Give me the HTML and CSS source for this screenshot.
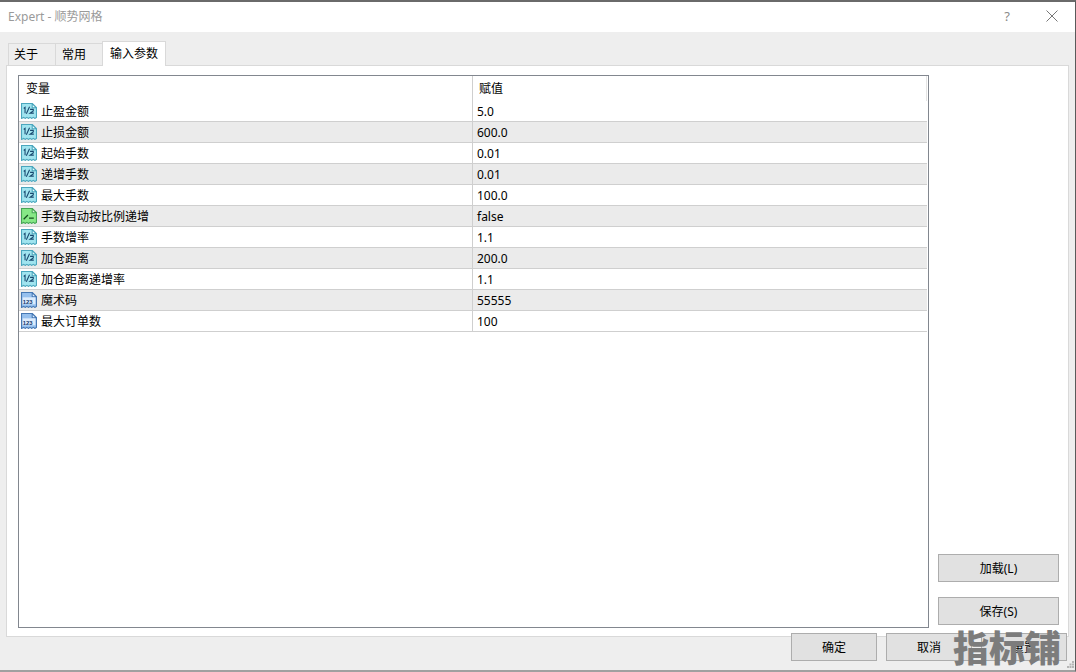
FILE: index.html
```html
<!DOCTYPE html>
<html lang="zh">
<head>
<meta charset="utf-8">
<title>Expert - 顺势网格</title>
<link rel="stylesheet" href="styles.css">
</head>
<body>
<svg class="defs" width="0" height="0" aria-hidden="true">
  <defs>
    <symbol id="i-real" viewBox="1 1 15 15">
      <path fill="#a0e4ef" stroke="#4aa6bd" d="M1.500 1.500H11.500L15.500 5.500V14.500L14 15.500L12.500 14.500L11 15.500L9.500 14.500L8 15.500L6.500 14.500L5 15.500L3.500 14.500L1.500 15.500Z"/>
      <path fill="#ecfcfe" stroke="#4aa6bd" d="M11.500 1.500V5.500H15.500Z"/>
      <path fill="none" stroke="#17476e" stroke-width="1" d="M3.500 6L4.800 5V10.500M9 4.500L6 11M9.500 7H12.500V8.500L9.500 10.500H13"/>
    </symbol>
    <symbol id="i-int" viewBox="1 1 15 15">
      <path fill="#96c0ee" stroke="#4678b4" d="M1.500 1.500H11.500L15.500 5.500V14.500L14 15.500L12.500 14.500L11 15.500L9.500 14.500L8 15.500L6.500 14.500L5 15.500L3.500 14.500L1.500 15.500Z"/>
      <path fill="#e4f0ff" stroke="#4678b4" d="M11.500 1.500V5.500H15.500Z"/>
      <rect x="2.500" y="6" width="12" height="6.500" fill="#dcebfc"/>
      <text x="2.700" y="11.800" class="icon-text">123</text>
    </symbol>
    <symbol id="i-bool" viewBox="1 1 15 15">
      <path fill="#86e886" stroke="#45a555" d="M1.500 1.500H11.500L15.500 5.500V14.500L14 15.500L12.500 14.500L11 15.500L9.500 14.500L8 15.500L6.500 14.500L5 15.500L3.500 14.500L1.500 15.500Z"/>
      <path fill="#dcfadc" stroke="#45a555" d="M11.500 1.500V5.500H15.500Z"/>
      <path fill="none" stroke="#14501f" stroke-width="1.200" d="M3.500 11.500L7.500 7.500M8.500 10.500H13"/>
    </symbol>
  </defs>
</svg>

<div class="window">
  <header class="titlebar">
    <span class="title">Expert - 顺势网格</span>
    <span class="help">?</span>
    <svg class="close" width="12" height="12" viewBox="0 0 12 12"><path d="M0.500 0.500L11.500 11.500M11.500 0.500L0.500 11.500"/></svg>
  </header>

  <nav class="tabs">
    <span class="tab">关于</span>
    <span class="tab">常用</span>
    <span class="tab active">输入参数</span>
  </nav>

  <main class="panel">
    <section class="list">
      <div class="row head"><span class="c1 plain">变量</span><span class="c2">赋值</span></div>
      <div class="row"><span class="c1"><svg class="ico"><use href="#i-real"/></svg>止盈金额</span><span class="c2">5.0</span></div>
      <div class="row alt"><span class="c1"><svg class="ico"><use href="#i-real"/></svg>止损金额</span><span class="c2">600.0</span></div>
      <div class="row"><span class="c1"><svg class="ico"><use href="#i-real"/></svg>起始手数</span><span class="c2">0.01</span></div>
      <div class="row alt"><span class="c1"><svg class="ico"><use href="#i-real"/></svg>递增手数</span><span class="c2">0.01</span></div>
      <div class="row"><span class="c1"><svg class="ico"><use href="#i-real"/></svg>最大手数</span><span class="c2">100.0</span></div>
      <div class="row alt"><span class="c1"><svg class="ico"><use href="#i-bool"/></svg>手数自动按比例递增</span><span class="c2">false</span></div>
      <div class="row"><span class="c1"><svg class="ico"><use href="#i-real"/></svg>手数增率</span><span class="c2">1.1</span></div>
      <div class="row alt"><span class="c1"><svg class="ico"><use href="#i-real"/></svg>加仓距离</span><span class="c2">200.0</span></div>
      <div class="row"><span class="c1"><svg class="ico"><use href="#i-real"/></svg>加仓距离递增率</span><span class="c2">1.1</span></div>
      <div class="row alt"><span class="c1"><svg class="ico"><use href="#i-int"/></svg>魔术码</span><span class="c2">55555</span></div>
      <div class="row"><span class="c1"><svg class="ico"><use href="#i-int"/></svg>最大订单数</span><span class="c2">100</span></div>
    </section>
    <aside class="side">
      <button class="btn side-btn">加载(L)</button>
      <button class="btn side-btn">保存(S)</button>
    </aside>
  </main>

  <footer class="footer">
    <button class="btn foot-btn">确定</button>
    <button class="btn foot-btn">取消</button>
    <button class="btn foot-btn">重置</button>
  </footer>
  <svg class="grip" width="7" height="7" viewBox="0 0 7 7"><path d="M5 0h2v2H5zM2.500 2.500h2v2h-2zM5 2.500h2v2H5zM0 5h2v2H0zM2.500 5h2v2h-2zM5 5h2v2H5z"/></svg>
  <div class="watermark">指标铺</div>
</div>
</body>
</html>
```

FILE: styles.css
```css
* { box-sizing: border-box; }
html, body { margin: 0; padding: 0; }
body {
  width: 1076px;
  height: 672px;
  overflow: hidden;
  background: #eeeeee;
  font-family: "Noto Sans CJK SC", "Noto Sans", sans-serif;
  font-size: 12px;
  color: #000;
}
.defs { position: absolute; }
.icon-text {
  font-family: "Liberation Sans", sans-serif;
  font-size: 5.500px;
  font-weight: 700;
  fill: #12386e;
}

.window {
  position: relative;
  width: 1076px;
  height: 672px;
  display: flex;
  flex-direction: column;
  background: #eeeeee;
  border-top: 2px solid #6a6a6a;
  border-bottom: 2px solid #a0a0a0;
  border-right: 1px solid #5a5a5a;
}
.titlebar {
  height: 30px;
  background: #fff;
  display: flex;
  align-items: center;
  padding: 0 17px 2px 8px;
  flex: none;
}
.title {
  font-family: "Noto Sans", "Noto Sans CJK SC", sans-serif;
  font-size: 12px;
  color: #9a9a9a;
  flex: 1;
}
.help {
  font-family: "Noto Sans", sans-serif;
  font-size: 13px;
  color: #8a8a8a;
  margin-right: 36px;
}
.close { fill: none; stroke: #777; stroke-width: 1; }

.tabs {
  height: 33px;
  flex: none;
  display: flex;
  align-items: flex-end;
  padding-left: 8px;
  position: relative;
  z-index: 1;
}
.tab {
  height: 22px;
  width: 48px;
  padding-left: 5px;
  line-height: 20px;
  border: 1px solid #d9d9d9;
  border-bottom: 0;
  margin-right: -1px;
  background: #eee;
}
.tab + .tab { padding-left: 6px; }
.tab.active {
  width: 64px;
  height: 25px;
  margin-bottom: -1px;
  padding-left: 7px;
  line-height: 22px;
  background: #fff;
  margin-right: 0;
}

.panel {
  height: 572px;
  margin: 0 6px;
  flex: none;
  display: flex;
  background: #fff;
  border: 1px solid #d9d9d9;
  padding: 9px 9px 8px 11px;
}
.list {
  width: 911px;
  flex: none;
  border: 1px solid #82878f;
  background: #fff;
  display: flex;
  flex-direction: column;
}
.row {
  height: 21px;
  flex: none;
  display: flex;
  border-bottom: 1px solid #cfcfcf;
  line-height: 21px;
  white-space: nowrap;
  margin-right: 1px;
}
.row.alt { background: #ebebeb; }
.row.head {
  height: 25px;
  border-bottom: 0;
  line-height: 23px;
  border-right: 1px solid #e4e4e4;
  margin-right: 1px;
}
.c1 {
  width: 454px;
  flex: none;
  display: flex;
  align-items: center;
  padding: 0 0 2px 2px;
  border-right: 1px solid #cfcfcf;
}
.c1.plain { padding: 0 0 0 7px; align-items: flex-start; }
.c2 {
  padding-left: 4px;
  font-family: "Noto Sans", "Noto Sans CJK SC", sans-serif;
  font-size: 12px;
}
.head .c2 { font-family: "Noto Sans CJK SC", sans-serif; padding-left: 6px; }
.ico { width: 16px; height: 16px; margin: 2px 4px 0 0; flex: none; }

.side {
  flex: 1;
  display: flex;
  flex-direction: column;
  justify-content: flex-end;
  align-items: flex-start;
  gap: 15px;
  padding: 0 0 3px 9px;
}
.btn {
  background: #e1e1e1;
  border: 1px solid #adadad;
  font-family: "Noto Sans", "Noto Sans CJK SC", sans-serif;
  font-size: 12px;
  color: #000;
  padding: 0;
}
.side-btn { width: 121px; height: 28px; }

.footer {
  flex: none;
  display: flex;
  justify-content: flex-end;
  gap: 9px;
  margin-top: -4px;
  padding-right: 8px;
  position: relative;
}
.foot-btn { width: 86px; height: 28px; }

.grip {
  position: absolute;
  right: 1px;
  bottom: 2px;
  fill: #b5b5b5;
}

.watermark {
  position: absolute;
  left: 953px;
  top: 620px;
  font-family: "Noto Sans CJK SC", sans-serif;
  font-size: 36px;
  font-weight: 900;
  line-height: 48px;
  color: #7c7c7c;
  white-space: nowrap;
}
```
